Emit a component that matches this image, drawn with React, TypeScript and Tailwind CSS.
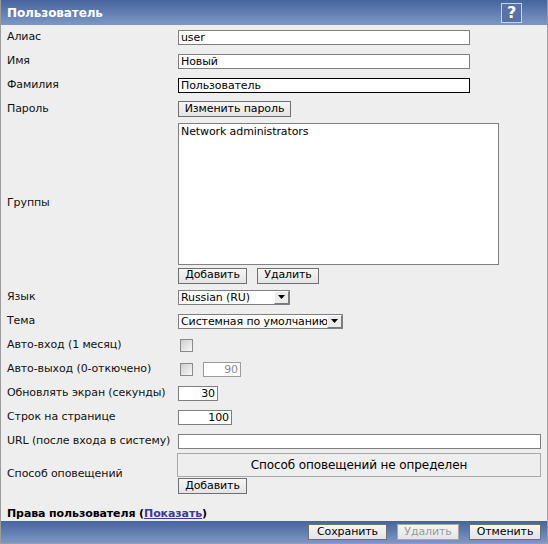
import React from "react";

const font = "font-['DejaVu_Sans',Verdana,sans-serif] tracking-[-0.1px]";

function Label({ children }: { children: React.ReactNode }) {
  return <div className="w-[177px] shrink-0 pl-[6px] pt-[1px] text-[11px] text-[#111] whitespace-nowrap">{children}</div>;
}

function TextInput({ value, w, dark, right }: { value: string; w: string; dark?: boolean; right?: boolean }) {
  return (
    <div
      className={`h-[15px] ${w} bg-white border ${dark ? "border-black" : "border-[#7f7f7f]"} px-[2px] text-[11px] leading-[13px] text-black ${right ? "text-right" : ""}`}
    >
      {value}
    </div>
  );
}

function Btn({ children, w, disabled }: { children: React.ReactNode; w: string; disabled?: boolean }) {
  return (
    <div
      className={`h-[16px] ${w} flex items-center justify-center border bg-gradient-to-b from-[#f6f6f6] to-[#e4e4e4] text-[11px] ${disabled ? "text-[#9a9a9a] border-[#a8a8a8]" : "text-black border-[#6f6f6f]"}`}
    >
      {children}
    </div>
  );
}

function Select({ value, w }: { value: string; w: string }) {
  return (
    <div className={`h-[15px] ${w} bg-white border border-[#7f7f7f] flex items-stretch text-[11px]`}>
      <div className="flex-1 pl-[2px] leading-[13px] overflow-hidden whitespace-nowrap">{value}</div>
      <div className="w-[15px] bg-[#ececec] border-l border-t border-white border-r-[#7a7a7a] border-b-[#7a7a7a] border-r border-b flex items-center justify-center">
        <svg width="7" height="4" viewBox="0 0 7 4">
          <path d="M0 0h7L3.5 4z" fill="#000" />
        </svg>
      </div>
    </div>
  );
}

function Checkbox() {
  return <div className="w-[13px] h-[13px] border border-[#8a8a8a] bg-gradient-to-br from-[#cfcfcf] to-[#f8f8f8] ml-[2px]" />;
}

function Row({ label, children, h = "h-[24px]" }: { label: React.ReactNode; children?: React.ReactNode; h?: string }) {
  return (
    <div className={`flex items-center ${h}`}>
      <Label>{label}</Label>
      <div className="flex items-center">{children}</div>
    </div>
  );
}

export default function App() {
  return (
    <div className={`w-[548px] h-[544px] flex flex-col border-x border-b border-[#9c9c9c] bg-[#eeeeee] ${font}`}>
      <div className="h-[25px] shrink-0 flex items-center justify-between bg-gradient-to-b from-[#46649f] to-[#7e97c4] pl-[6px] pr-[25px]">
        <span className="text-white font-bold text-[12px]">Пользователь</span>
        <div className="w-[21px] h-[20px] border border-[#c6d2e6] bg-[#5872a8] flex items-center justify-center text-white font-bold text-[16px] leading-none">?</div>
      </div>
      <div className="flex flex-col flex-1">
        <Row label="Алиас"><TextInput value="user" w="w-[292px]" /></Row>
        <Row label="Имя"><TextInput value="Новый" w="w-[292px]" /></Row>
        <Row label="Фамилия"><TextInput value="Пользователь" w="w-[292px]" dark /></Row>
        <Row label="Пароль"><Btn w="w-[113px]">Изменить пароль</Btn></Row>
        <div className="flex items-center h-[164px]">
          <Label>Группы</Label>
          <div className="flex flex-col">
            <div className="w-[321px] h-[142px] bg-white border border-[#808080] px-[2px] text-[11px] leading-[15px]">Network administrators</div>
            <div className="flex gap-[10px] mt-[3px]">
              <Btn w="w-[69px]">Добавить</Btn>
              <Btn w="w-[62px]">Удалить</Btn>
            </div>
          </div>
        </div>
        <Row label="Язык"><Select value="Russian (RU)" w="w-[112px]" /></Row>
        <Row label="Тема"><Select value="Системная по умолчанию" w="w-[165px]" /></Row>
        <Row label="Авто-вход (1 месяц)"><Checkbox /></Row>
        <Row label="Авто-выход (0-откючено)">
          <Checkbox />
          <div className="ml-[10px] h-[15px] w-[38px] bg-white border border-[#9a9a9a] px-[2px] text-right text-[11px] leading-[13px] text-[#8a8a8a]">90</div>
        </Row>
        <Row label="Обновлять экран (секунды)"><TextInput value="30" w="w-[40px]" right /></Row>
        <Row label="Строк на странице"><TextInput value="100" w="w-[54px]" right /></Row>
        <Row label="URL (после входа в систему)"><TextInput value="" w="w-[363px]" /></Row>
        <div className="flex items-center h-[41px]">
          <Label>Способ оповещений</Label>
          <div className="flex flex-col -ml-[1px]">
            <div className="w-[364px] h-[24px] border border-[#a8a8a8] flex items-center justify-center text-[12px] text-black">Способ оповещений не определен</div>
            <div className="ml-[1px] mt-[1px]"><Btn w="w-[69px]">Добавить</Btn></div>
          </div>
        </div>
        <div className="flex-1 flex items-end pb-[1px] pl-[6px] text-[11px] leading-[13px] font-bold text-black">
          <span>Права пользователя (<span className="text-[#3b3b9c] underline">Показать</span>)</span>
        </div>
      </div>
      <div className="h-[22px] shrink-0 flex items-center justify-end gap-[10px] pr-[6px] bg-gradient-to-b from-[#46649f] to-[#7e97c4]">
        <Btn w="w-[79px]">Сохранить</Btn>
        <Btn w="w-[62px]" disabled>Удалить</Btn>
        <Btn w="w-[72px]">Отменить</Btn>
      </div>
    </div>
  );
}
